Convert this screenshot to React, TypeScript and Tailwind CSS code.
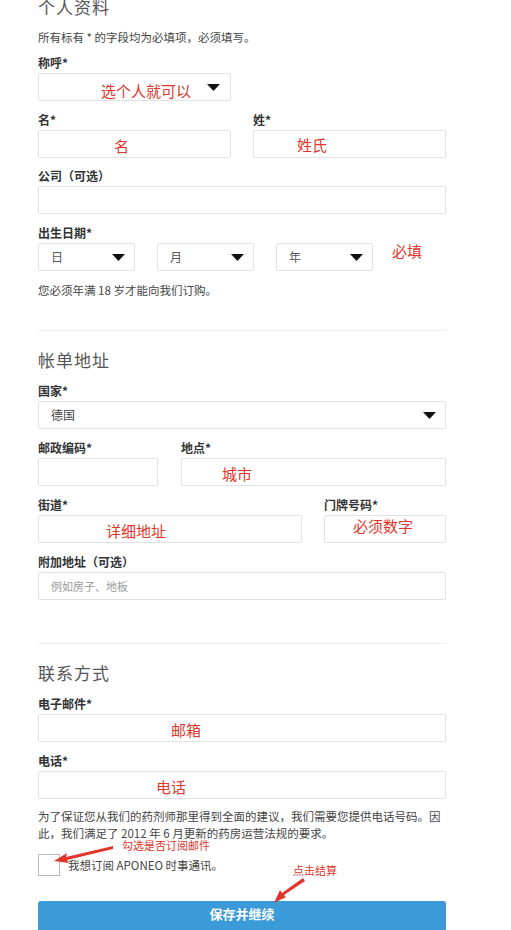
import React from "react";

const sans = "font-['Microsoft_YaHei','Noto_Sans_CJK_SC',sans-serif]";

function Caret() {
  return (
    <svg width="13" height="7" viewBox="0 0 13 7" className="shrink-0">
      <path d="M0 0 H13 L6.5 7 Z" fill="#111" />
    </svg>
  );
}

function Label({ children }: { children: React.ReactNode }) {
  return (
    <div className="h-[18px] text-[12px] leading-[18px] font-semibold text-[#333] mb-[1px]">
      {children}
    </div>
  );
}

function Box({
  className = "",
  children,
}: {
  className?: string;
  children?: React.ReactNode;
}) {
  return (
    <div
      className={`h-[28px] flex items-center rounded-[2px] border border-[#e2e2e2] bg-white ${className}`}
    >
      {children}
    </div>
  );
}

function Note({ children, className = "" }: { children: React.ReactNode; className?: string }) {
  return <span className={`text-[15px] leading-none text-[#e0362c] ${className}`}>{children}</span>;
}

function Heading({ children }: { children: React.ReactNode }) {
  return (
    <h2 className="text-[17px] leading-[24px] text-[#555] tracking-[1px] font-['Liberation_Serif','Noto_Sans_CJK_SC',serif]">
      {children}
    </h2>
  );
}

export default function App() {
  return (
    <div className={`w-[511px] h-[930px] overflow-hidden bg-white ${sans}`}>
      <div className="ml-[38px] w-[408px]">
        {/* 个人资料 */}
        <div className="-mt-[3px]">
          <Heading>个人资料</Heading>
        </div>
        <p className="mt-[7px] text-[11.5px] leading-[18px] text-[#444]">
          所有标有 * 的字段均为必填项，必须填写。
        </p>

        <div className="mt-[8px]">
          <Label>称呼*</Label>
          <Box className="w-[193px] pl-[62px] pr-[10px] justify-between">
            <Note className="pt-[6px]">选个人就可以</Note>
            <Caret />
          </Box>
        </div>

        <div className="mt-[10px] flex gap-[22px]">
          <div className="w-[193px]">
            <Label>名*</Label>
            <Box className="pl-[75px]">
              <Note className="pt-[2px]">名</Note>
            </Box>
          </div>
          <div className="w-[193px]">
            <Label>姓*</Label>
            <Box className="pl-[43px]">
              <Note>姓氏</Note>
            </Box>
          </div>
        </div>

        <div className="mt-[9px]">
          <Label>公司（可选）</Label>
          <Box />
        </div>

        <div className="mt-[10px]">
          <Label>出生日期*</Label>
          <div className="flex items-center">
            {["日", "月", "年"].map((t, i) => (
              <Box
                key={t}
                className={`w-[97px] pl-[12px] pr-[9px] justify-between ${i > 0 ? "ml-[22px]" : ""}`}
              >
                <span className="text-[12px] text-[#555]">{t}</span>
                <Caret />
              </Box>
            ))}
            <Note className="ml-[19px] -mt-[13px]">必填</Note>
          </div>
        </div>

        <p className="mt-[10px] text-[11.5px] leading-[18px] text-[#444]">
          您必须年满 18 岁才能向我们订购。
        </p>

        <div className="mt-[31px] h-px bg-[#f0f0f0]" />

        {/* 帐单地址 */}
        <div className="mt-[19px]">
          <Heading>帐单地址</Heading>
        </div>

        <div className="mt-[8px]">
          <Label>国家*</Label>
          <Box className="pl-[12px] pr-[9px] justify-between">
            <span className="text-[12px] text-[#444]">德国</span>
            <Caret />
          </Box>
        </div>

        <div className="mt-[10px] flex gap-[23px]">
          <div className="w-[120px]">
            <Label>邮政编码*</Label>
            <Box />
          </div>
          <div className="flex-1">
            <Label>地点*</Label>
            <Box className="pl-[40px]">
              <Note className="pt-[2px]">城市</Note>
            </Box>
          </div>
        </div>

        <div className="mt-[10px] flex gap-[22px]">
          <div className="w-[264px]">
            <Label>街道*</Label>
            <Box className="pl-[67px]">
              <Note className="pt-[2px]">详细地址</Note>
            </Box>
          </div>
          <div className="flex-1">
            <Label>门牌号码*</Label>
            <Box className="pl-[28px]">
              <Note className="-mt-[7px]">必须数字</Note>
            </Box>
          </div>
        </div>

        <div className="mt-[10px]">
          <Label>附加地址（可选）</Label>
          <Box className="pl-[12px]">
            <span className="text-[11px] text-[#999]">例如房子、地板</span>
          </Box>
        </div>

        <div className="mt-[43px] h-px bg-[#f0f0f0]" />

        {/* 联系方式 */}
        <div className="mt-[19px]">
          <Heading>联系方式</Heading>
        </div>

        <div className="mt-[8px]">
          <Label>电子邮件*</Label>
          <Box className="pl-[132px]">
            <Note className="pt-[2px]">邮箱</Note>
          </Box>
        </div>

        <div className="mt-[10px]">
          <Label>电话*</Label>
          <Box className="pl-[117px]">
            <Note className="pt-[2px]">电话</Note>
          </Box>
        </div>

        <p className="mt-[9px] text-[11.5px] leading-[17px] text-[#444] whitespace-nowrap">
          为了保证您从我们的药剂师那里得到全面的建议，我们需要您提供电话号码。因
          <br />
          此，我们满足了 2012 年 6 月更新的药房运营法规的要求。
        </p>

        <div className="relative mt-[12px]">
          <div className="flex items-center">
            <div className="w-[22px] h-[22px] border border-[#bbb] bg-white" />
            <span className="ml-[8px] mt-[2px] text-[11.5px] text-[#444]">
              我想订阅 APONEO 时事通讯。
            </span>
          </div>

          <span className="absolute left-[84px] -top-[14px] text-[11px] leading-none text-[#e0362c]">
            勾选是否订阅邮件
          </span>
          <span className="absolute left-[255px] top-[11px] text-[11px] leading-none text-[#e0362c]">
            点击结算
          </span>

          <svg
            className="absolute -left-[38px] -top-[855px] pointer-events-none"
            width="511"
            height="930"
            viewBox="0 0 511 930"
          >
            {/* arrow to checkbox */}
            <path d="M113 847 L66 858 L67 854 L54 862 L69 864 L67 861 L113 850 Z" fill="#e0362c" />
            {/* arrow to button */}
            <path d="M303 879 L282 894 L280 891 L274 904 L286 898 L284 896 L305 882 Z" fill="#e0362c" />
          </svg>
        </div>

        <button className="mt-[25px] w-full h-[36px] rounded-t-[3px] bg-[#3b9ad8] text-white text-[13px] font-bold leading-[28px] pb-[8px] font-['Liberation_Serif','Noto_Sans_CJK_SC',serif]">
          保存并继续
        </button>
      </div>
    </div>
  );
}
